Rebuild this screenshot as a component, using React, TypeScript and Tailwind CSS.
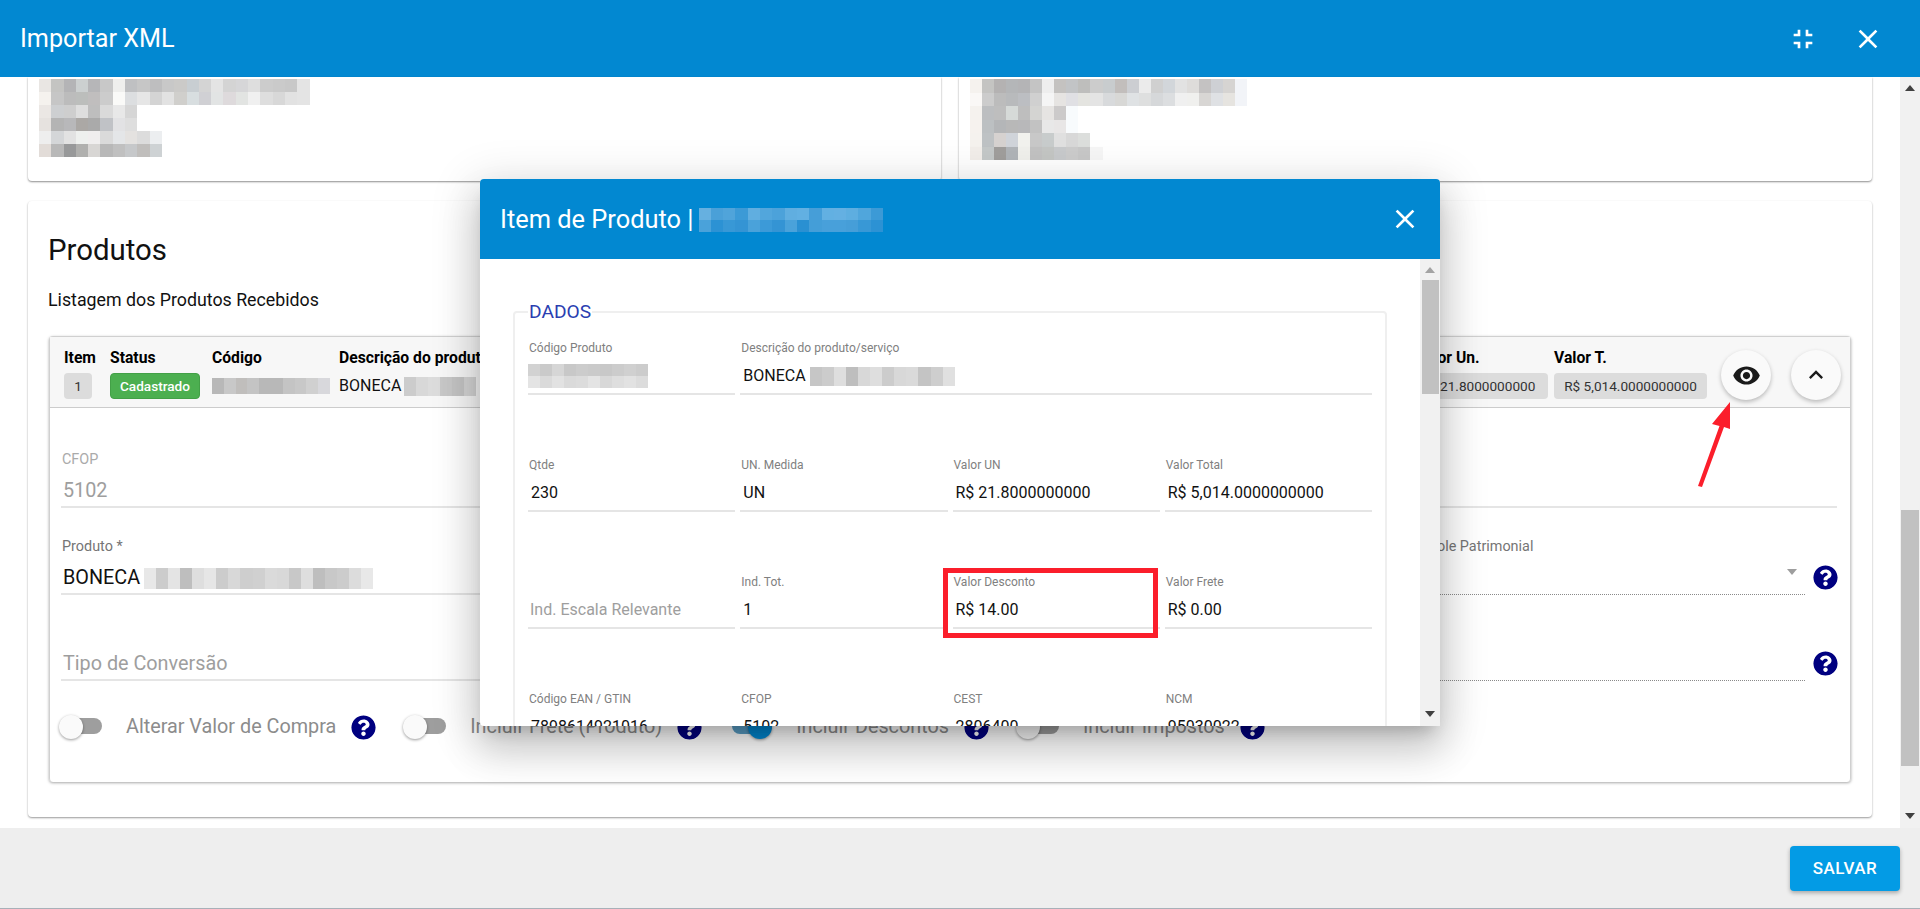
import { FaQuestionCircle } from "react-icons/fa";

const CLOSE = "M19 6.41L17.59 5 12 10.59 6.41 5 5 6.41 10.59 12 5 17.59 6.41 19 12 13.41 17.59 19 19 17.59 13.41 12z";
const COMPRESS = "M5 16h3v3h2v-5H5v2zm3-8H5v2h5V5H8v3zm6 11h2v-3h3v-2h-5v5zm2-11V5h-2v5h5V8h-3z";
const EYE = "M12 4.5C7 4.5 2.73 7.61 1 12c1.73 4.39 6 7.5 11 7.5s9.27-3.11 11-7.5c-1.73-4.39-6-7.5-11-7.5zM12 17c-2.76 0-5-2.24-5-5s2.24-5 5-5 5 2.24 5 5-2.24 5-5 5zm0-8c-1.66 0-3 1.34-3 3s1.34 3 3 3 3-1.34 3-3-1.34-3-3-3z";
const CHEVRON = "M12 8l-6 6 1.41 1.41L12 10.83l4.59 4.58L18 14z";

function Icon({ d, className }: { d: string; className: string }) {
  return (
    <svg viewBox="0 0 24 24" fill="currentColor" className={className}>
      <path d={d} />
    </svg>
  );
}

// pixelated (censored) text: each row is a list of colours, one per cell
function Mosaic({ rows, cell, rowH }: { rows: string[]; cell: number; rowH: number }) {
  return (
    <div className="flex flex-col">
      {rows.map((row, i) => (
        <div key={i} className="flex">
          {row.split(" ").map((c, j) => (
            <span key={j} style={{ width: cell, height: rowH, backgroundColor: `#${c}` }} />
          ))}
        </div>
      ))}
    </div>
  );
}

function ScrollArrow({ up, className }: { up?: boolean; className: string }) {
  return (
    <svg viewBox="0 0 10 6" fill="currentColor" className={`h-[6px] w-[10px] ${className}`}>
      <polygon points={up ? "5,0 10,6 0,6" : "0,0 10,0 5,6"} />
    </svg>
  );
}

function Help() {
  return <FaQuestionCircle className="h-[25px] w-[25px] shrink-0 rounded-full bg-white text-[#000080]" />;
}

function Toggle({ on }: { on?: boolean }) {
  return (
    <span className="relative block h-[26px] w-[43px] shrink-0">
      <span className={`absolute left-[3px] right-0 top-[4px] h-[16px] rounded-full ${on ? "bg-[#5a9fc7]" : "bg-[#9e9e9e]"}`} />
      <span
        className={`absolute top-px h-[24px] w-[24px] rounded-full shadow-[0_1px_3px_rgba(0,0,0,0.4)] ${
          on ? "right-0 bg-[#0288d1]" : "left-0 bg-[#fafafa]"
        }`}
      />
    </span>
  );
}

function ToggleItem({ label, on }: { label: string; on?: boolean }) {
  return (
    <div className="flex items-center">
      <Toggle on={on} />
      <span className="ml-[24px] whitespace-nowrap text-[19.8px] leading-none text-[#8c8c8c]">{label}</span>
      <span className="ml-[15px] mr-[27px]">
        <Help />
      </span>
    </div>
  );
}

function PanelField({ label, muted, children, className }: { label?: string; muted?: boolean; children?: React.ReactNode; className: string }) {
  return (
    <div className={className}>
      <div className={`h-[18px] whitespace-nowrap pl-px text-[14.4px] leading-[20px] ${muted ? "text-[#aaaaaa]" : "text-[#757575]"}`}>{label}</div>
      {children}
    </div>
  );
}

function HeaderCol({ title, width, titleClass = "", children }: { title: string; width: string; titleClass?: string; children: React.ReactNode }) {
  return (
    <div className={`${width} shrink-0`}>
      <div className={`h-[20px] whitespace-nowrap text-[15.7px] font-bold leading-[20px] text-black ${titleClass}`}>{title}</div>
      <div className="mt-[5px] flex h-[26px] items-center">{children}</div>
    </div>
  );
}

function Chip({ children, className = "" }: { children: React.ReactNode; className?: string }) {
  return (
    <span className={`flex h-[26px] items-center justify-center whitespace-nowrap rounded-[4px] bg-[#dcdcdc] text-[13.6px] text-[#333333] ${className}`}>
      {children}
    </span>
  );
}

function ModalField({ label, value, placeholder, children }: { label?: string; value?: string; placeholder?: string; children?: React.ReactNode }) {
  return (
    <div className="flex h-[55px] flex-col border-b-2 border-[#e5e5e5]">
      <div className="h-[16px] pl-px text-[12px] leading-[16px] text-[#808080]">{label}</div>
      <div className="flex h-[37px] items-center pl-[3px] pt-[3px] text-[16px] text-[#111111]">
        {placeholder ? <span className="-ml-px text-[#9e9e9e]">{placeholder}</span> : value}
        {children}
      </div>
    </div>
  );
}

export default function App() {
  return (
    <div className="relative flex h-[909px] w-[1920px] flex-col overflow-hidden bg-white font-[Roboto,sans-serif]">
      <header className="flex h-[77px] shrink-0 items-center justify-between bg-[#0288d1] pl-[20px] pr-[36px] text-white">
        <h1 className="text-[25.2px]">Importar XML</h1>
        <div className="flex items-center gap-[33px]">
          <Icon d={COMPRESS} className="h-[32px] w-[32px]" />
          <Icon d={CLOSE} className="h-[32px] w-[32px]" />
        </div>
      </header>

      <div className="flex min-h-0 flex-1">
        <main className="min-w-0 flex-1 px-[28px]">
          <div className="flex h-[104px] gap-[18px]">
            <section className="flex-1 rounded-b-[4px] pl-[11px] pt-[2px] shadow-[0_1px_2px_rgba(0,0,0,0.45)]">
              <Mosaic
                cell={12.3}
                rowH={13}
                rows={[
                  "e9e6e3 c4c4c2 b4b4b6 ccd0d0 b6b6b8 c8c8c8 efefed bfc0c2 c6c6c6 bebebf c8c8c8 cbcac8 c8ced2 d4d4d4 e4e4e4 d4d4d4 d6d6d8 dedede cccccc cacaca c8c8c8 e4e4e4",
                  "f5f2ee c6c6c6 bcbcbc bcbebc c0bebe cccccc fafaf8 dcdee0 e6e6e6 d4d4d4 e2e2e2 d0cfcc d8dee0 d0d0d4 e2e4e4 dedadc e2e4e2 f0f0f0 dedede d8d8d8 e2e2e2 e4e4e4",
                  "ebe7e4 cdcfd1 cecece dedede bebebe dadada e8e8e8 d6d6d6",
                  "e6e2df b4b4b4 b8b8ba aba8a5 aaaaaa c0c2c6 e2e2e4 dedede",
                  "eeeeee d4d6d8 e2e2e2 eef0ee f0eeee dadada e4e6e8 e4e2e0 dcdcdc eceef0",
                  "e2dcd8 b8b8b8 98999a b0b0ae d8d6d4 b8b8b8 c0c0c0 c6c8ca c0bebc ced2d4",
                ]}
              />
            </section>
            <section className="flex-1 rounded-b-[4px] pl-[11px] pt-[2px] shadow-[0_1px_2px_rgba(0,0,0,0.45)]">
              <Mosaic
                cell={12.05}
                rowH={13.5}
                rows={[
                  "f5f2ee c4c4c2 b4b2b2 b4b6b8 b4b4b6 c4c4c4 eeeeee c4c2c0 c2c4c6 bebebc cccccc c8ccce c2bebc ccced2 ebebeb d0d0d0 d2d6da e2e2e2 dedcda c4c2c2 ced0d4 d6d4d2 f2f4f8",
                  "faf8f6 cccccc bcbcbc b8babc bcbec2 d0d0d0 f5f5f5 e6e4e2 e0e0e4 e4e4e0 e4e4e4 d8dadc d8d8d6 dfe2e4 dedfdf d6d8da dcdee0 f0f0f0 f0f0ee d8d6d4 dfe1e4 e6e4e0 f2f4f8",
                  "f5f2ee bcbec0 bebebe d6dad8 bebebe d4d4d2 e6e4e2 cccaca f8fbfd",
                  "f6f2ee bcc0c2 b4b6b8 b8b8b8 b8b8ba c2c2c2 e8e8e8 e8e6e6 f8fbfd",
                  "f5f2ee bec2c4 d6d2d0 d0d4da f2f2ee c8c8c8 c8cccc e0e0e0 d8d8d8 dcdedc",
                  "f2eeea c4c8c8 a09e9c b0b4b8 f0f0ec c2c2c2 c4c6c4 c8cacc cccccc c8c8c8 f6f6f6",
                ]}
              />
            </section>
          </div>

          <section className="mt-[20px] h-[616px] rounded-[4px] pl-[20px] pr-[21px] pt-[31px] shadow-[0_1px_2px_rgba(0,0,0,0.4)]">
            <h2 className="text-[29.4px] leading-[36px] text-[#111111]">Produtos</h2>
            <p className="mt-[20px] text-[17.8px] leading-[24px] text-[#111111]">Listagem dos Produtos Recebidos</p>

            <div className="ml-px mt-[24px] rounded-[4px] border-x border-t border-[#d0d0d0] shadow-[0_1px_3px_rgba(0,0,0,0.35)]">
              <div className="flex h-[71px] border-b border-[#cccccc] bg-[#f7f7f7] pl-[14px] pt-[11px]">
                <HeaderCol title="Item" width="w-[46px]">
                  <Chip className="w-[28px]">1</Chip>
                </HeaderCol>
                <HeaderCol title="Status" width="w-[102px]">
                  <span className="flex h-[26px] w-[90px] items-center justify-center rounded-[4px] border border-[#43a047] bg-[#4caf50] text-[13.6px] font-medium text-white">
                    Cadastrado
                  </span>
                </HeaderCol>
                <HeaderCol title="Código" width="w-[127px]">
                  <Mosaic cell={11.8} rowH={16} rows={["b8b8b8 c8c8c8 c0bebc c4c4c4 b8b8b8 b8b8b8 c4c4c4 c8c8c8 d0d0d0 d8d8dc"]} />
                </HeaderCol>
                <HeaderCol title="Descrição do produto/serviço" width="w-[1069px]">
                  <span className="text-[16px] text-[#111111]">BONECA</span>
                  <span className="ml-[3px]">
                    <Mosaic cell={12} rowH={19} rows={["cccccc d8d8d8 dcdcdc c8c8c8 c4c4c4 d4d4d4"]} />
                  </span>
                </HeaderCol>
                <HeaderCol title="Valor Un." width="w-[146px]" titleClass="pl-[7px]">
                  <Chip className="w-[140px]">R$ 21.8000000000</Chip>
                </HeaderCol>
                <HeaderCol title="Valor T." width="w-[167px]">
                  <Chip className="w-[153px]">R$ 5,014.0000000000</Chip>
                </HeaderCol>
                <button className="mt-[2px] flex h-[50px] w-[50px] shrink-0 items-center justify-center rounded-full bg-[#fafafa] text-[#1a1a1a] shadow-[0_2px_4px_rgba(0,0,0,0.25)]">
                  <Icon d={EYE} className="h-[29px] w-[29px]" />
                </button>
                <button className="ml-[20px] mt-[2px] flex h-[50px] w-[50px] shrink-0 items-center justify-center rounded-full bg-[#fafafa] text-[#1a1a1a] shadow-[0_2px_4px_rgba(0,0,0,0.25)]">
                  <Icon d={CHEVRON} className="h-[28px] w-[28px]" />
                </button>
              </div>

              <div className="pb-[42px] pl-[11px] pr-[13px] pt-[42px]">
                <PanelField label="CFOP" muted className="h-[58px]">
                  <div className="flex h-[40px] items-center border-b-2 border-[#e5e5e5] pl-[2px] pt-[8px] text-[19.8px] text-[#9e9e9e]">5102</div>
                </PanelField>

                <div className="mt-[29px] flex gap-[16px]">
                  <PanelField label="Produto *" className="h-[58px] flex-1">
                    <div className="flex h-[40px] items-center border-b-2 border-[#e5e5e5] pl-[2px] pt-[8px] text-[19.8px] text-[#111111]">
                      BONECA
                      <span className="ml-[4px]">
                        <Mosaic
                          cell={12.05}
                          rowH={21}
                          rows={["e8e8e8 cccccc e4e4e4 bebebe dedede e6e6e6 cccccc d8d8d8 cecece d0d0d0 dadada d8d8d8 c8c8c8 dedede bebebe c8c8c8 cccccc dcdcdc e8e8e8"]}
                        />
                      </span>
                    </div>
                  </PanelField>
                  <PanelField label="Controle Patrimonial" className="h-[58px] w-[404px] shrink-0">
                    <div className="relative h-[40px] border-b border-dotted border-[#8a8a8a]">
                      <ScrollArrow className="absolute right-[8px] top-[14px] text-[#9e9e9e]" />
                    </div>
                  </PanelField>
                  <span className="ml-[-8px] mr-[-1px] mt-[28px]">
                    <Help />
                  </span>
                </div>

                <div className="mt-[28px] flex gap-[16px]">
                  <PanelField className="h-[58px] flex-1">
                    <div className="flex h-[40px] items-center border-b-2 border-[#e5e5e5] pl-[2px] pt-[8px] text-[19.8px] text-[#9e9e9e]">Tipo de Conversão</div>
                  </PanelField>
                  <PanelField className="h-[58px] w-[404px] shrink-0">
                    <div className="h-[40px] border-b border-dotted border-[#8a8a8a]" />
                  </PanelField>
                  <span className="ml-[-8px] mr-[-1px] mt-[28px]">
                    <Help />
                  </span>
                </div>

                <div className="-ml-[2px] mt-[33px] flex h-[26px] items-center">
                  <ToggleItem label="Alterar Valor de Compra" />
                  <ToggleItem label="Incluir Frete (Produto)" />
                  <ToggleItem label="Incluir Descontos" on />
                  <ToggleItem label="Incluir Impostos" />
                </div>
              </div>
            </div>
          </section>
        </main>

        <div className="flex w-[20px] shrink-0 flex-col items-center bg-[#f1f1f1] pb-[9px] pt-[8px]">
          <ScrollArrow up className="text-[#404040]" />
          <div className="mt-[419px] h-[256px] w-[18px] bg-[#c1c1c1]" />
          <ScrollArrow className="mt-auto text-[#404040]" />
        </div>
      </div>

      <footer className="flex h-[81px] shrink-0 justify-end border-b border-[#a8b0b8] bg-[#eeeeee] pr-[20px] pt-[18px]">
        <button className="h-[45px] w-[110px] rounded-[4px] bg-[#039be5] text-[17px] font-medium tracking-[0.5px] text-white shadow-[0_2px_4px_rgba(0,0,0,0.3)]">
          SALVAR
        </button>
      </footer>

      {/* Item de Produto dialog, floats over the page */}
      <div className="absolute left-[480px] top-[179px] w-[960px] rounded-[4px] bg-white shadow-[0_11px_15px_-7px_rgba(0,0,0,0.2),0_24px_38px_3px_rgba(0,0,0,0.14),0_9px_46px_8px_rgba(0,0,0,0.12)]">
        <div className="flex h-[80px] items-center rounded-t-[4px] bg-[#0288d1] pl-[20px] pr-[19px] text-white">
          <span className="pt-px text-[25.4px]">Item de Produto |</span>
          <span className="ml-[5px] mt-[2px]">
            <Mosaic
              cell={12.3}
              rowH={12}
              rows={[
                "66b0e0 4aa0d8 50a4da 3c9ad6 60aee0 52a6dc 4ca2da 60aee0 62b0e2 469ed8 62b0e2 64b0e2 5eaee0 50a6dc 3c9ad6",
                "4aa2da 2c92d4 3898d6 3494d4 4aa2da 3c9ad8 3494d4 4aa2da 2a90d2 449ed8 48a0da 48a0da 469ed8 3898d6 2c92d4",
              ]}
            />
          </span>
          <Icon d={CLOSE} className="ml-auto h-[32px] w-[32px]" />
        </div>

        <div className="relative flex h-[467px] overflow-hidden">
          <div className="min-w-0 flex-1 px-[33px] pt-[42px]">
            <fieldset className="rounded-[4px] border-2 border-[#efefef] px-[13px] pb-[40px]">
              <legend className="px-[1px] text-[19.2px] leading-[21px] text-[#2a3eb1]">DADOS</legend>
              <div className="mt-[18px] grid grid-cols-4 gap-x-[5px] gap-y-[62px]">
                <ModalField label="Código Produto">
                  <span className="-ml-[3px]">
                    <Mosaic
                      cell={12}
                      rowH={12}
                      rows={[
                        "d2d2d2 cacaca d6d6d6 c8c8c8 cccccc cacaca c8c8c8 cccccc d0d0d0 cccccc",
                        "e4e4e4 dadada e2e2e2 dadada dcdcdc e4e4e4 d8d8d8 dedede e2e2e2 dcdcdc",
                      ]}
                    />
                  </span>
                </ModalField>
                <div className="col-span-3">
                  <ModalField label="Descrição do produto/serviço" value="BONECA">
                    <span className="ml-[4px]">
                      <Mosaic cell={12.1} rowH={19} rows={["c6c6c6 cccccc dedede bebebe d8d8d8 dedede cccccc d8d8d8 dadada c4c4c4 cecece e0e0e0"]} />
                    </span>
                  </ModalField>
                </div>
                <ModalField label="Qtde" value="230" />
                <ModalField label="UN. Medida" value="UN" />
                <ModalField label="Valor UN" value="R$ 21.8000000000" />
                <ModalField label="Valor Total" value="R$ 5,014.0000000000" />
                <ModalField placeholder="Ind. Escala Relevante" />
                <ModalField label="Ind. Tot." value="1" />
                <ModalField label="Valor Desconto" value="R$ 14.00" />
                <ModalField label="Valor Frete" value="R$ 0.00" />
                <ModalField label="Código EAN / GTIN" value="7898614921016" />
                <ModalField label="CFOP" value="5102" />
                <ModalField label="CEST" value="2806400" />
                <ModalField label="NCM" value="95030022" />
              </div>
            </fieldset>
          </div>
          <div className="flex w-[20px] shrink-0 flex-col items-center bg-[#f1f1f1] pb-[9px] pt-[8px]">
            <ScrollArrow up className="text-[#a3a3a3]" />
            <div className="mt-[7px] h-[114px] w-[17px] bg-[#c1c1c1]" />
            <ScrollArrow className="mt-auto text-[#404040]" />
          </div>
        </div>

        {/* red annotation around Valor Desconto */}
        <div className="absolute left-[463px] top-[389px] h-[70px] w-[215px] border-[5px] border-[#fb1e2b]" />
      </div>

      {/* red annotation arrow pointing at the eye button */}
      <svg viewBox="0 0 40 90" className="absolute left-[1695px] top-[400px] h-[90px] w-[40px]" fill="#fb1e2b">
        <polygon points="35,2 17,24 24.5,26 3,86 7,87 29,27 35,29" />
      </svg>
    </div>
  );
}
